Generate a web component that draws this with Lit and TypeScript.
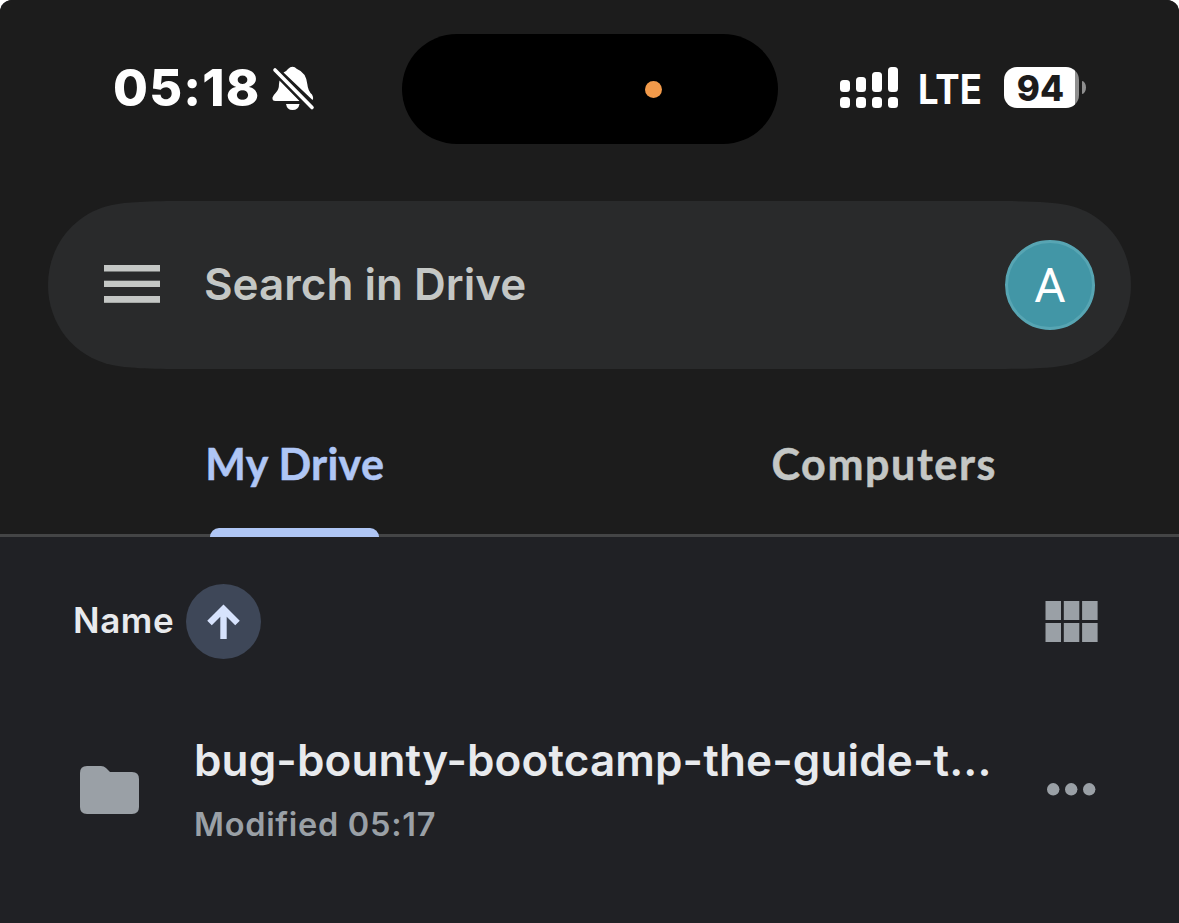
import { LitElement, html, css, svg } from "lit";
import { customElement, property } from "lit/decorators.js";
import { classMap } from "lit/directives/class-map.js";

// ─── Status bar ─────────────────────────────────────────────────────────────
// Clock on the left, the black island in the middle, signal/battery on the right.
@customElement("status-bar")
class StatusBar extends LitElement {
  @property() time = "";
  @property() network = "";
  @property({ type: Number }) battery = 0;

  static styles = css`
    :host {
      display: grid;
      grid-template-columns: 402px 376px 1fr;
      height: 110px;
      padding-top: 34px;
      color: #fff;
    }
    .left,
    .right {
      display: flex;
      align-items: center;
    }
    .left {
      padding-left: 113px;
    }
    .time {
      width: 158px;
      font-size: 50.5px;
      font-weight: 800;
      letter-spacing: 1.2px;
      line-height: 60px;
      padding-bottom: 2px;
    }
    .bell {
      margin-bottom: 2px;
    }
    .island {
      display: flex;
      align-items: center;
      justify-content: flex-end;
      border-radius: 55px;
      background: #000;
    }
    .mic {
      width: 17px;
      height: 17px;
      margin-right: 116px;
      border-radius: 50%;
      background: #f29a4a;
    }
    .right {
      padding-left: 62px;
    }
    .network {
      width: 65px;
      margin-left: 20px;
      font-size: 41px;
      font-weight: 700;
      line-height: 50px;
      white-space: nowrap;
      transform: scaleX(0.89);
      transform-origin: left;
    }
    .signal {
      margin-bottom: 3px;
    }
    .battery {
      display: flex;
      align-items: center;
      margin: 0 0 3px 21px;
    }
    .level {
      width: 75px;
      height: 41px;
      box-sizing: border-box;
      padding-right: 2px;
      border-radius: 13px;
      background: linear-gradient(90deg, #fff 71px, #8e8e8e 71px);
      color: #1c1c1c;
      font-size: 35px;
      font-weight: 800;
      line-height: 42px;
      text-align: center;
    }
    .nub {
      width: 4px;
      height: 13px;
      margin-left: 3px;
      border-radius: 0 4px 4px 0 / 0 6.5px 6.5px 0;
      background: #8e8e8e;
    }
  `;

  render() {
    // Each column is a bar over a dot; the bars grow to the right.
    const bars = [12, 15, 20, 25];
    return html`
      <div class="left">
        <span class="time">${this.time}</span>
        <svg class="bell" width="44" height="46" viewBox="271 65 44 46" fill="#fff">
          <path
            d="M283.500 72.500Q286.500 71 288 69Q292.500 64.500 297 69Q306 72.500 307.300 84Q308 91 312 94.500Q314 98 312.500 100Z"
          />
          <path
            d="M279.500 80.500L299.500 101H275.500Q272 101 272.500 97.500Q273 95.500 276 92.500Q279 89.500 279 84Z"
          />
          <path d="M286 104H299.500Q298.500 110 292.500 110Q287 110 286 104Z" />
          <path
            d="M275 70L312 107.500"
            stroke="#1c1c1c"
            stroke-width="7.500"
            stroke-linecap="round"
          />
          <path d="M275 70L312 107.500" stroke="#fff" stroke-width="3.600" stroke-linecap="round" />
        </svg>
      </div>
      <div class="island"><span class="mic"></span></div>
      <div class="right">
        <svg class="signal" width="58" height="41" fill="#fff">
          ${bars.map(
            (h, i) => svg`
              <rect x=${i * 16} y=${25 - h} width="10" height=${h} rx="3.500" />
              <rect x=${i * 16} y="30" width="10" height="11" rx="3.500" />
            `
          )}
        </svg>
        <span class="network">${this.network}</span>
        <div class="battery">
          <span class="level">${this.battery}</span>
          <span class="nub"></span>
        </div>
      </div>
    `;
  }
}

// ─── Search bar ─────────────────────────────────────────────────────────────
@customElement("search-bar")
class SearchBar extends LitElement {
  @property() placeholder = "";
  @property() initial = "";

  static styles = css`
    :host {
      display: flex;
      align-items: center;
      height: 168px;
      margin: 57px 48px 0;
      padding: 0 36px 0 56px;
      background: #292a2b;
      /* continuous corners, softer than a plain pill */
      clip-path: path(
        "M140 0H943C985 0 1004 1 1019 4C1057 12 1083 45 1083 84C1083 123 1057 156 1019 164C1004 167 985 168 943 168H140C98 168 79 167 64 164C26 156 0 123 0 84C0 45 26 12 64 4C79 1 98 0 140 0Z"
      );
    }
    .menu {
      margin-bottom: 2px;
    }
    .text {
      flex: 1;
      margin-left: 44px;
      color: #c4c7c5;
      font-size: 44px;
      font-weight: 560;
      line-height: 56px;
      padding-bottom: 3px;
    }
    .avatar {
      width: 90px;
      height: 90px;
      box-sizing: border-box;
      border: 3px solid #57a5b3;
      border-radius: 50%;
      background: #4296a6;
      color: #fff;
      font-family: Roboto, sans-serif;
      font-size: 48px;
      line-height: 85px;
      text-align: center;
    }
  `;

  render() {
    return html`
      <svg class="menu" width="56" height="38" fill="#c4c7c5">
        <rect y="0" width="56" height="6.500" />
        <rect y="15.700" width="56" height="6.300" />
        <rect y="31" width="56" height="6.800" />
      </svg>
      <span class="text">${this.placeholder}</span>
      <span class="avatar">${this.initial}</span>
    `;
  }
}

// ─── Tabs ───────────────────────────────────────────────────────────────────
@customElement("drive-tabs")
class DriveTabs extends LitElement {
  @property({ type: Array }) tabs: string[] = [];
  @property() selected = "";

  static styles = css`
    :host {
      display: grid;
      grid-template-columns: 1fr 1fr;
      height: 165px;
      border-bottom: 3px solid #444546;
    }
    .tab {
      display: flex;
      flex-direction: column;
      align-items: center;
      justify-content: space-between;
      padding-top: 65px;
      margin-bottom: -3px;
      color: #c4c7c5;
      font-family: Lato, sans-serif;
      font-size: 43px;
      font-weight: 700;
      letter-spacing: 1.6px;
      line-height: 60px;
      -webkit-text-stroke: 0.5px;
    }
    .tab.active {
      color: #afc6f5;
      letter-spacing: 0.3px;
    }
    .tab.active::after {
      content: "";
      width: 169px;
      height: 9px;
      border-radius: 9px 9px 0 0;
      background: #afc6f5;
    }
  `;

  render() {
    return this.tabs.map(
      (tab) => html`
        <div class=${classMap({ tab: true, active: tab === this.selected })}>
          <span class="label">${tab}</span>
        </div>
      `
    );
  }
}

// ─── File row ───────────────────────────────────────────────────────────────
@customElement("file-row")
class FileRow extends LitElement {
  @property() name = "";
  @property() modified = "";

  static styles = css`
    :host {
      display: flex;
      align-items: center;
      padding: 72px 83px 0 80px;
      white-space: nowrap;
    }
    .info {
      flex: 1;
      margin-left: 55px;
      height: 118px;
    }
    .name {
      margin-top: -1px;
      color: #e8eaed;
      font-size: 44px;
      font-weight: 580;
      letter-spacing: 0.13px;
      line-height: 60px;
    }
    .modified {
      margin-top: 9px;
      color: #9aa0a6;
      font-size: 32.5px;
      font-weight: 560;
      letter-spacing: 0.7px;
      line-height: 52px;
    }
    .more {
      margin-bottom: 2px;
    }
  `;

  render() {
    return html`
      <svg width="59" height="48" fill="#9aa0a6">
        <path
          d="M7 0H21Q24 0 26 2L30 6H52Q59 6 59 13V41Q59 48 52 48H7Q0 48 0 41V7Q0 0 7 0Z"
        />
      </svg>
      <div class="info">
        <div class="name">${this.name}</div>
        <div class="modified">${this.modified}</div>
      </div>
      <svg class="more" width="49" height="13" fill="#9aa0a6">
        <circle cx="6.200" cy="6.300" r="6.200" />
        <circle cx="24.200" cy="6.300" r="6.200" />
        <circle cx="42.200" cy="6.300" r="6.200" />
      </svg>
    `;
  }
}

// ─── Page ───────────────────────────────────────────────────────────────────
@customElement("app-root")
class AppRoot extends LitElement {
  static styles = css`
    :host {
      display: block;
      height: 923px;
      overflow: hidden;
      background: #fff;
      font-family: Inter, "Liberation Sans", sans-serif;
    }
    .screen {
      height: 923px;
      overflow: hidden;
      border-radius: 12px 12px 0 0;
      background: #202125;
    }
    .header {
      background: #1c1c1c;
    }
    .sort {
      display: flex;
      align-items: center;
      height: 75px;
      padding: 47px 81px 0 73px;
    }
    .sort-label {
      width: 113px;
      color: #e8eaed;
      font-size: 35px;
      font-weight: 560;
      letter-spacing: 0.6px;
      line-height: 44px;
      padding-bottom: 3px;
    }
    .direction {
      display: flex;
      align-items: center;
      justify-content: center;
      width: 75px;
      height: 75px;
      margin-right: auto;
      border-radius: 50%;
      background: #3e4758;
    }
  `;

  render() {
    return html`
      <div class="screen">
        <div class="header">
          <status-bar time="05:18" network="LTE" battery="94"></status-bar>
          <search-bar placeholder="Search in Drive" initial="A"></search-bar>
          <drive-tabs .tabs=${["My Drive", "Computers"]} selected="My Drive"></drive-tabs>
        </div>
        <div class="sort">
          <span class="sort-label">Name</span>
          <span class="direction">
            <svg width="34" height="35" fill="none" stroke="#d7e3fd" stroke-width="6.400">
              <path d="M16.500 35V5M2.500 19L16.500 5L30.500 19" />
            </svg>
          </span>
          <svg width="53" height="41" fill="#9aa0a6">
            ${[0, 22].map((y) =>
              [0, 18.3, 36.6].map((x) => svg`<rect x=${x + 0.5} y=${y} width="15.500" height="19" />`)
            )}
          </svg>
        </div>
        <file-row name="bug-bounty-bootcamp-the-guide-t..." modified="Modified 05:17"></file-row>
      </div>
    `;
  }
}
